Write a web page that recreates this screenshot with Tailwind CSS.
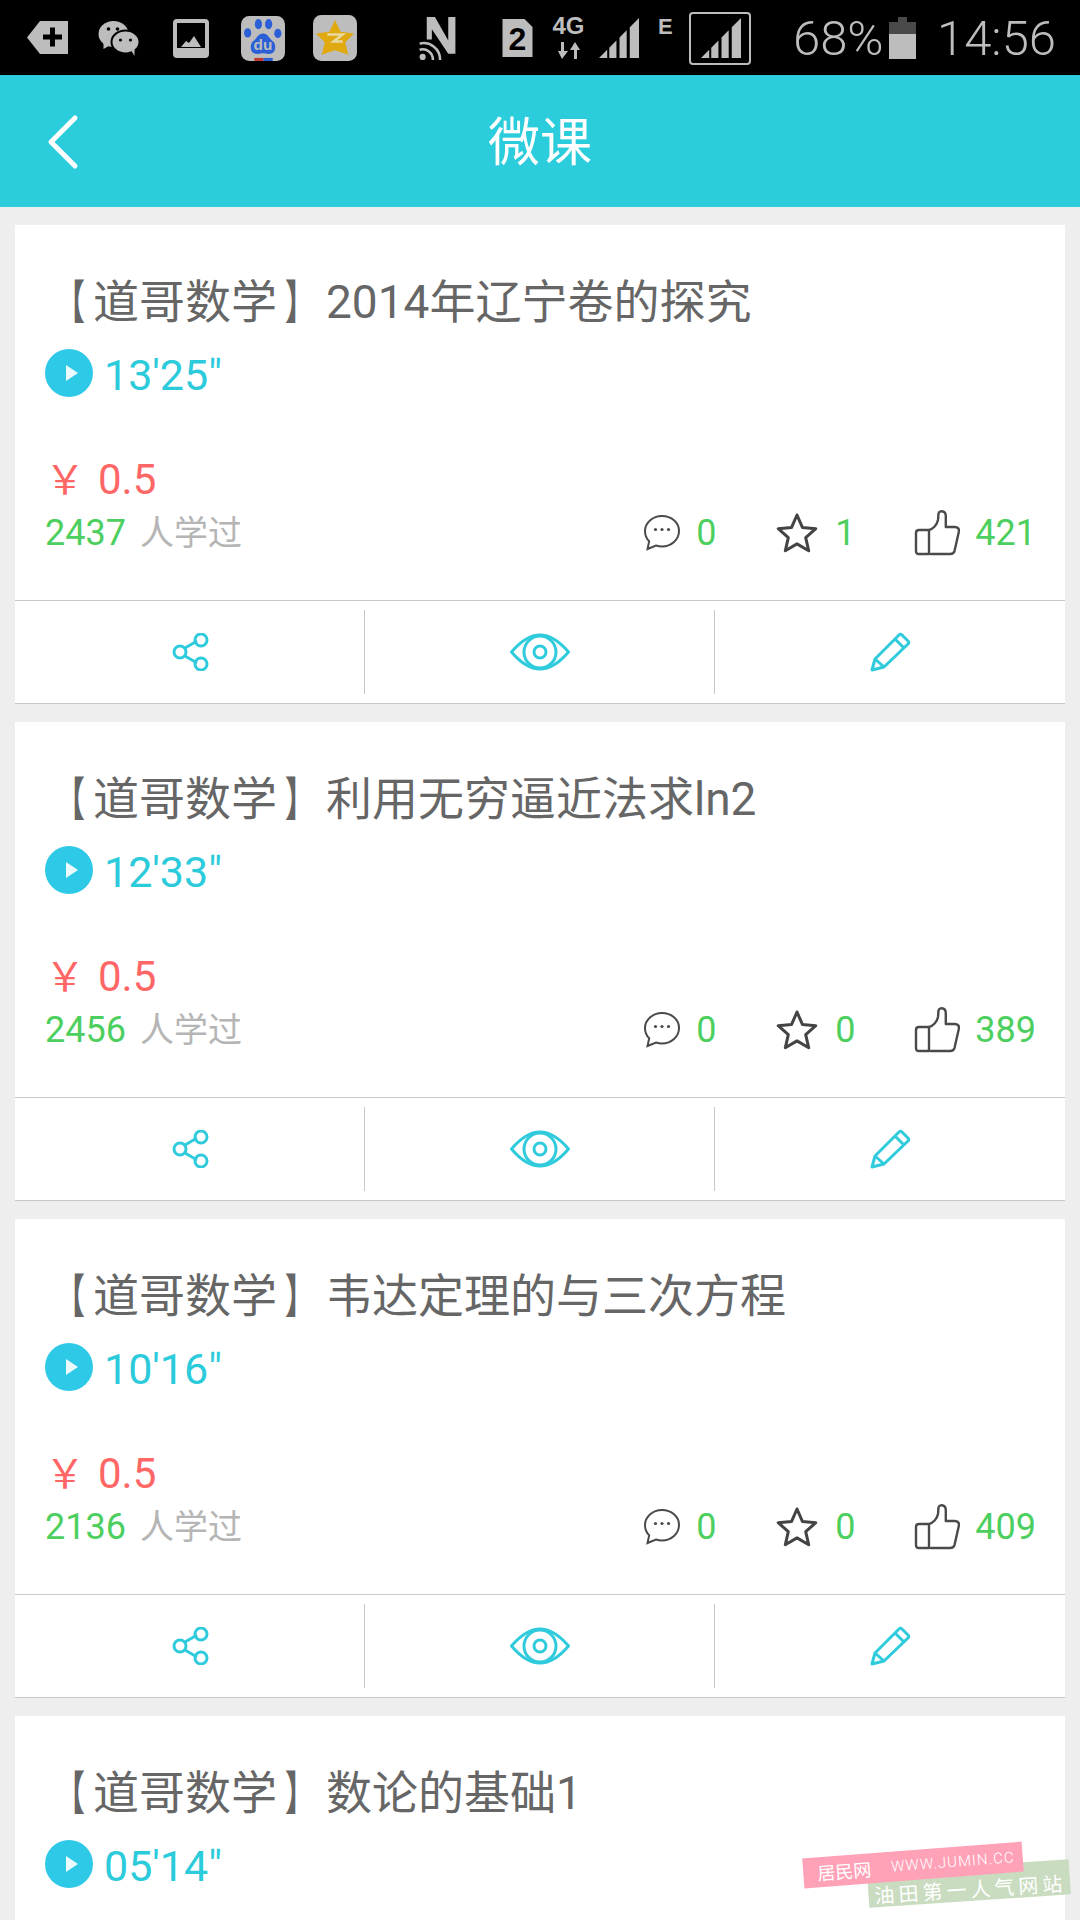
<!DOCTYPE html>
<html lang="zh-CN">
<head>
<meta charset="UTF-8">
<title>微课</title>
<script src="https://cdn.jsdelivr.net/npm/@tailwindcss/browser@4"></script>
</head>
<body class="bg-[#eeeeee]">
<svg class="hidden">
  <symbol id="comment" viewBox="0 0 38 38"><path d="M19 2C9.6 2 2 8.8 2 17c0 4.8 1.8 8 4.2 10.200L4.500 35l8.500-3.500c2 .6 4 .9 6 .9 9.400 0 17-6.800 17-15.400S28.400 2 19 2z" fill="none" stroke="#4a4a4a" stroke-width="2"/><circle cx="12.500" cy="15.500" r="1.600" fill="#4a4a4a"/><circle cx="19" cy="15.500" r="1.600" fill="#4a4a4a"/><circle cx="25.500" cy="15.500" r="1.600" fill="#4a4a4a"/></symbol>
  <symbol id="star" viewBox="0 0 42 42"><path d="M21 3l5.400 12.400 13.400 1.300-10.100 8.900 3 13.200L21 31.900 9.300 38.800l3-13.200L2.200 16.700l13.400-1.300z" fill="none" stroke="#444444" stroke-width="3" stroke-linejoin="round"/></symbol>
  <symbol id="thumb" viewBox="0 0 46 46"><path d="M15 20v24H5c-2 0-3-1-3-3V23c0-2 1-3 3-3h10c4-1 8-5 9-10 .4-3 .2-5 .5-6.500C25 1.500 27 1 29 1.500c2 .5 2.800 2.500 2.800 5v10.500h9c3 0 4.700 2 4 5l-4.300 19c-.6 2.400-2 3-4.500 3H17" fill="none" stroke="#4a4a4a" stroke-width="2.400" stroke-linejoin="round" stroke-linecap="round"/></symbol>
  <symbol id="share" viewBox="0 0 38 38"><path d="M13 15l12-7M13 23l12 7" stroke="#2fcbdc" stroke-width="3"/><circle cx="8" cy="19" r="6" fill="none" stroke="#2fcbdc" stroke-width="3"/><circle cx="29" cy="7" r="6" fill="none" stroke="#2fcbdc" stroke-width="3"/><circle cx="29" cy="31" r="6" fill="none" stroke="#2fcbdc" stroke-width="3"/></symbol>
  <symbol id="eye" viewBox="0 0 60 38"><path d="M1.500 19C10 9 19 2 30 2s20 7 28.500 17C50 29 41 36 30 36S10 29 1.500 19z" fill="none" stroke="#2fcbdc" stroke-width="3" stroke-linejoin="round"/><circle cx="30" cy="19" r="16" fill="none" stroke="#2fcbdc" stroke-width="3"/><circle cx="30" cy="19" r="6" fill="none" stroke="#2fcbdc" stroke-width="3"/></symbol>
  <symbol id="pencil" viewBox="0 0 40 40"><path d="M2 38l3-11L29 3c1-1 2-1 3 0l6 6c1 1 1 2 0 3L14 35z" fill="none" stroke="#2fcbdc" stroke-width="3" stroke-linejoin="round"/><path d="M5 27l9 8M25 7l9 9" fill="none" stroke="#2fcbdc" stroke-width="3"/></symbol>
  <symbol id="bars" viewBox="0 0 39 39"><path d="M0 39L8 31V39zM10 29L17 22V39H10zM20 19L27 12V39H20zM30 9L39 0V39H30z" fill="#bdbdbd"/></symbol>
  <symbol id="play" viewBox="0 0 48 48"><circle cx="24" cy="24" r="24" fill="#2fc9e8"/><path d="M21 16l12 8-12 8z" fill="#ffffff" opacity=".9"/></symbol>
</svg>

<div class="w-[1080px] h-[1920px] overflow-hidden relative font-['Roboto','Noto_Sans_CJK_SC',sans-serif]">
  <!-- status bar -->
  <div class="h-[75px] bg-black flex items-center pl-[27px] pt-[1px] text-[#bdbdbd]">
    <svg class="shrink-0 w-[41px] h-[34px]" viewBox="0 0 41 34"><path d="M13 0H41V33H13L0 16.500z" fill="#bdbdbd"/><path d="M19 13.500h7V6.500h5v7h7v5h-7v7h-5v-7h-7z" fill="#000000" transform="translate(-3 0)"/></svg>
    <svg class="shrink-0 w-[42px] h-[36px] ml-[30px]" viewBox="0 0 41 36"><ellipse cx="15" cy="14" rx="15" ry="13" fill="#bdbdbd"/><path d="M5 22l0 7 7-4z" fill="#bdbdbd"/><ellipse cx="27" cy="22" rx="14" ry="11.500" fill="#bdbdbd" stroke="#000000" stroke-width="2"/><path d="M33 31l3 5 0-7z" fill="#bdbdbd"/><circle cx="10" cy="9" r="1.800" fill="#000000"/><circle cx="19" cy="9" r="1.800" fill="#000000"/><circle cx="22" cy="20" r="1.600" fill="#000000"/><circle cx="32" cy="20" r="1.600" fill="#000000"/></svg>
    <svg class="shrink-0 w-[36px] h-[39px] ml-[33px]" viewBox="0 0 36 39"><rect x="2" y="2" width="32" height="35" rx="2" fill="none" stroke="#bdbdbd" stroke-width="4"/><rect x="2" y="29" width="32" height="8" fill="#bdbdbd"/><path d="M8 28l5-6 3 2 5-7 7 11z" fill="#bdbdbd"/></svg>
    <svg class="shrink-0 w-[44px] h-[45px] ml-[32px]" viewBox="0 0 43 44"><rect width="43" height="44" rx="8" fill="#bdbdbd"/><rect x="13" y="41" width="9" height="3" fill="#c0392b"/><rect x="22" y="41" width="9" height="3" fill="#2a5fd8"/><g fill="#2a5fd8"><ellipse cx="6.500" cy="16.500" rx="3.500" ry="4.500"/><ellipse cx="17" cy="8" rx="3.500" ry="5"/><ellipse cx="27" cy="8" rx="3.500" ry="5"/><ellipse cx="36" cy="17" rx="3.500" ry="4.500"/><path d="M21.500 17c5 0 6 5 10 8 3 3 3 11-3 12-3 .5-5-.5-7-.5s-4 1-7 .5c-6-1-6-9-3-12 4-3 5-8 10-8z"/></g><text x="21.500" y="33" text-anchor="middle" font-family="Liberation Sans" font-size="15" font-weight="700" fill="#bdbdbd">du</text></svg>
    <svg class="shrink-0 w-[44px] h-[46px] ml-[28px]" viewBox="0 0 43 45"><rect width="43" height="45" rx="8" fill="#bdbdbd"/><path d="M21.500 5l5.500 11.500 13 1.500-8.500 9 3 12-13-4.500L8.500 39l3-12L3 18l13-1.500z" fill="#dfa90f"/><path d="M14 19h15l-9 7h9" fill="none" stroke="#e8d9a0" stroke-width="2.500"/></svg>
    <svg class="shrink-0 w-[37px] h-[43px] ml-[62px]" viewBox="0 0 35 42"><path d="M7 0h8l13 23V0h7v36h-7L12 12v10H7z" fill="#bdbdbd"/><path d="M0 26a16 16 0 0 1 20 16M0 32a10 10 0 0 1 13 10" fill="none" stroke="#bdbdbd" stroke-width="2.500"/><circle cx="3" cy="39" r="3" fill="#bdbdbd"/></svg>
    <svg class="shrink-0 w-[31px] h-[38px] ml-[46px]" viewBox="0 0 30 38"><path d="M0 0H22L30 8V38H0z" fill="#bdbdbd"/><text x="15" y="31" text-anchor="middle" font-family="Liberation Sans" font-size="32" font-weight="700" fill="#000000">2</text></svg>
    <div class="shrink-0 w-[33px] ml-[19px] flex flex-col items-center self-start pt-[13px]">
      <span class="text-[24px] leading-[24px] font-bold font-['Liberation_Sans']">4G</span>
      <svg class="w-[22px] h-[17px] mt-[4px]" viewBox="0 0 22 17"><path d="M6 0v9h4l-6 8-4-8h3V0zM16 17V8h-4l5-8 5 8h-3v9z" fill="#bdbdbd"/></svg>
    </div>
    <svg class="shrink-0 w-[40px] h-[40px] ml-[14px]"><use href="#bars"/></svg>
    <span class="shrink-0 ml-[19px] w-[12px] self-start pt-[13px] text-[22px] leading-[26px] font-bold font-['Liberation_Sans']">E</span>
    <div class="shrink-0 ml-[19px] w-[62px] h-[53px] rounded-[4px] border-2 border-[#bdbdbd] flex items-center pl-[10px]">
      <svg class="w-[40px] h-[40px]"><use href="#bars"/></svg>
    </div>
    <span class="shrink-0 ml-[42px] w-[87px] text-[49px] leading-none font-light whitespace-nowrap">68%</span>
    <div class="shrink-0 ml-[9px] w-[27px] h-[42px] flex flex-col items-center">
      <div class="w-[9px] h-[5px] bg-[#4a4a4a]"></div>
      <div class="w-full h-[12px] bg-[#4a4a4a]"></div>
      <div class="w-full flex-1 bg-[#bdbdbd]"></div>
    </div>
    <span class="shrink-0 ml-[21px] text-[49px] leading-none font-light whitespace-nowrap">14:56</span>
  </div>

  <!-- header -->
  <div class="h-[132px] bg-[#2bccdb] grid grid-cols-[1fr_auto_1fr] items-center text-white">
    <svg class="w-[34px] h-[56px] ml-[46px] mt-[1px]" viewBox="0 0 34 56"><path d="M29 4L5 28l24 24" fill="none" stroke="#ffffff" stroke-width="5" stroke-linecap="round" stroke-linejoin="round"/></svg>
    <span class="text-[52px] leading-none pb-[5px] font-['Noto_Sans_CJK_SC',sans-serif]">微课</span>
    <span></span>
  </div>

  <!-- list -->
  <div class="px-[15px] pt-[18px] flex flex-col gap-[18px]">

    <div class="bg-white border-b border-[#c8c8c8]">
      <div class="h-[376px] border-b border-[#c8c8c8] pt-[47px] px-[30px]">
        <div class="text-[46px] leading-[60px] text-[#666666] whitespace-nowrap -ml-[6px]"><span class="inline-block font-bold scale-x-[0.65] origin-right mr-[8px]">【</span>道哥数学<span class="inline-block font-bold scale-x-[0.65] origin-left ml-[8px] mr-[-5px]">】</span>2014年辽宁卷的探究</div>
        <div class="mt-[17px] h-[48px] flex items-center">
          <svg class="w-[48px] h-[48px]"><use href="#play"/></svg>
          <span class="ml-[11px] pt-[4px] text-[43px] text-[#2bcbdb]">13'25"</span>
        </div>
        <div class="mt-[59px] h-[48px] leading-[48px] text-[42px] text-[#ff6666]"><span class="text-[40px]">￥</span><span class="ml-[13px]">0.5</span></div>
        <div class="mt-[7px] h-[44px] flex items-center">
          <span class="text-[36px] text-[#4ccf5e]">2437</span>
          <span class="ml-[14px] text-[34px] text-[#b5b5b5]">人学过</span>
          <div class="ml-auto -mr-[1px] flex items-center text-[36px] text-[#4ccf5e]">
            <svg class="w-[38px] h-[38px]"><use href="#comment"/></svg>
            <span class="ml-[15px] w-[20px]">0</span>
            <svg class="w-[42px] h-[42px] ml-[60px]"><use href="#star"/></svg>
            <span class="ml-[17px] w-[19px]">1</span>
            <svg class="w-[46px] h-[46px] ml-[60px]"><use href="#thumb"/></svg>
            <span class="ml-[15px]">421</span>
          </div>
        </div>
      </div>
      <div class="h-[102px] grid grid-cols-3 items-center py-[9px]">
        <div class="h-full flex items-center justify-center border-r border-[#c8c8c8]"><svg class="w-[38px] h-[38px] ml-[2px]"><use href="#share"/></svg></div>
        <div class="h-full flex items-center justify-center border-r border-[#c8c8c8]"><svg class="w-[60px] h-[38px] ml-[1px]"><use href="#eye"/></svg></div>
        <div class="h-full flex items-center justify-center"><svg class="w-[40px] h-[40px]"><use href="#pencil"/></svg></div>
      </div>
    </div>

    <div class="bg-white border-b border-[#c8c8c8]">
      <div class="h-[376px] border-b border-[#c8c8c8] pt-[47px] px-[30px]">
        <div class="text-[46px] leading-[60px] text-[#666666] whitespace-nowrap -ml-[6px]"><span class="inline-block font-bold scale-x-[0.65] origin-right mr-[8px]">【</span>道哥数学<span class="inline-block font-bold scale-x-[0.65] origin-left ml-[8px] mr-[-5px]">】</span>利用无穷逼近法求ln2</div>
        <div class="mt-[17px] h-[48px] flex items-center">
          <svg class="w-[48px] h-[48px]"><use href="#play"/></svg>
          <span class="ml-[11px] pt-[4px] text-[43px] text-[#2bcbdb]">12'33"</span>
        </div>
        <div class="mt-[59px] h-[48px] leading-[48px] text-[42px] text-[#ff6666]"><span class="text-[40px]">￥</span><span class="ml-[13px]">0.5</span></div>
        <div class="mt-[7px] h-[44px] flex items-center">
          <span class="text-[36px] text-[#4ccf5e]">2456</span>
          <span class="ml-[14px] text-[34px] text-[#b5b5b5]">人学过</span>
          <div class="ml-auto -mr-[1px] flex items-center text-[36px] text-[#4ccf5e]">
            <svg class="w-[38px] h-[38px]"><use href="#comment"/></svg>
            <span class="ml-[15px] w-[20px]">0</span>
            <svg class="w-[42px] h-[42px] ml-[60px]"><use href="#star"/></svg>
            <span class="ml-[17px] w-[19px]">0</span>
            <svg class="w-[46px] h-[46px] ml-[60px]"><use href="#thumb"/></svg>
            <span class="ml-[15px]">389</span>
          </div>
        </div>
      </div>
      <div class="h-[102px] grid grid-cols-3 items-center py-[9px]">
        <div class="h-full flex items-center justify-center border-r border-[#c8c8c8]"><svg class="w-[38px] h-[38px] ml-[2px]"><use href="#share"/></svg></div>
        <div class="h-full flex items-center justify-center border-r border-[#c8c8c8]"><svg class="w-[60px] h-[38px] ml-[1px]"><use href="#eye"/></svg></div>
        <div class="h-full flex items-center justify-center"><svg class="w-[40px] h-[40px]"><use href="#pencil"/></svg></div>
      </div>
    </div>

    <div class="bg-white border-b border-[#c8c8c8]">
      <div class="h-[376px] border-b border-[#c8c8c8] pt-[47px] px-[30px]">
        <div class="text-[46px] leading-[60px] text-[#666666] whitespace-nowrap -ml-[6px]"><span class="inline-block font-bold scale-x-[0.65] origin-right mr-[8px]">【</span>道哥数学<span class="inline-block font-bold scale-x-[0.65] origin-left ml-[8px] mr-[-5px]">】</span>韦达定理的与三次方程</div>
        <div class="mt-[17px] h-[48px] flex items-center">
          <svg class="w-[48px] h-[48px]"><use href="#play"/></svg>
          <span class="ml-[11px] pt-[4px] text-[43px] text-[#2bcbdb]">10'16"</span>
        </div>
        <div class="mt-[59px] h-[48px] leading-[48px] text-[42px] text-[#ff6666]"><span class="text-[40px]">￥</span><span class="ml-[13px]">0.5</span></div>
        <div class="mt-[7px] h-[44px] flex items-center">
          <span class="text-[36px] text-[#4ccf5e]">2136</span>
          <span class="ml-[14px] text-[34px] text-[#b5b5b5]">人学过</span>
          <div class="ml-auto -mr-[1px] flex items-center text-[36px] text-[#4ccf5e]">
            <svg class="w-[38px] h-[38px]"><use href="#comment"/></svg>
            <span class="ml-[15px] w-[20px]">0</span>
            <svg class="w-[42px] h-[42px] ml-[60px]"><use href="#star"/></svg>
            <span class="ml-[17px] w-[19px]">0</span>
            <svg class="w-[46px] h-[46px] ml-[60px]"><use href="#thumb"/></svg>
            <span class="ml-[15px]">409</span>
          </div>
        </div>
      </div>
      <div class="h-[102px] grid grid-cols-3 items-center py-[9px]">
        <div class="h-full flex items-center justify-center border-r border-[#c8c8c8]"><svg class="w-[38px] h-[38px] ml-[2px]"><use href="#share"/></svg></div>
        <div class="h-full flex items-center justify-center border-r border-[#c8c8c8]"><svg class="w-[60px] h-[38px] ml-[1px]"><use href="#eye"/></svg></div>
        <div class="h-full flex items-center justify-center"><svg class="w-[40px] h-[40px]"><use href="#pencil"/></svg></div>
      </div>
    </div>

    <div class="bg-white h-[300px]">
      <div class="pt-[47px] px-[30px]">
        <div class="text-[46px] leading-[60px] text-[#666666] whitespace-nowrap -ml-[6px]"><span class="inline-block font-bold scale-x-[0.65] origin-right mr-[8px]">【</span>道哥数学<span class="inline-block font-bold scale-x-[0.65] origin-left ml-[8px] mr-[-5px]">】</span>数论的基础1</div>
        <div class="mt-[17px] h-[48px] flex items-center">
          <svg class="w-[48px] h-[48px]"><use href="#play"/></svg>
          <span class="ml-[11px] pt-[4px] text-[43px] text-[#2bcbdb]">05'14"</span>
        </div>
      </div>
    </div>
  </div>

  <!-- watermark -->
  <div class="absolute left-[868px] top-[1866px] w-[202px] h-[35px] bg-[#c9dcbf] -rotate-[3.8deg] flex items-end pl-[6px] pb-[2px] text-white text-[20px] leading-none tracking-[4px] whitespace-nowrap font-['Noto_Sans_CJK_SC',sans-serif]">油田第一人气网站</div>
  <div class="absolute left-[803px] top-[1850px] w-[220px] h-[30px] bg-[#ffa2b8] -rotate-[4.4deg] flex items-center pl-[14px] text-white text-[18px] leading-none whitespace-nowrap font-['Noto_Sans_CJK_SC',sans-serif]">居民网<span class="ml-[20px] text-[15px] tracking-[1px] font-light font-['Roboto']">WWW.JUMIN.CC</span></div>
</div>
</body>
</html>
